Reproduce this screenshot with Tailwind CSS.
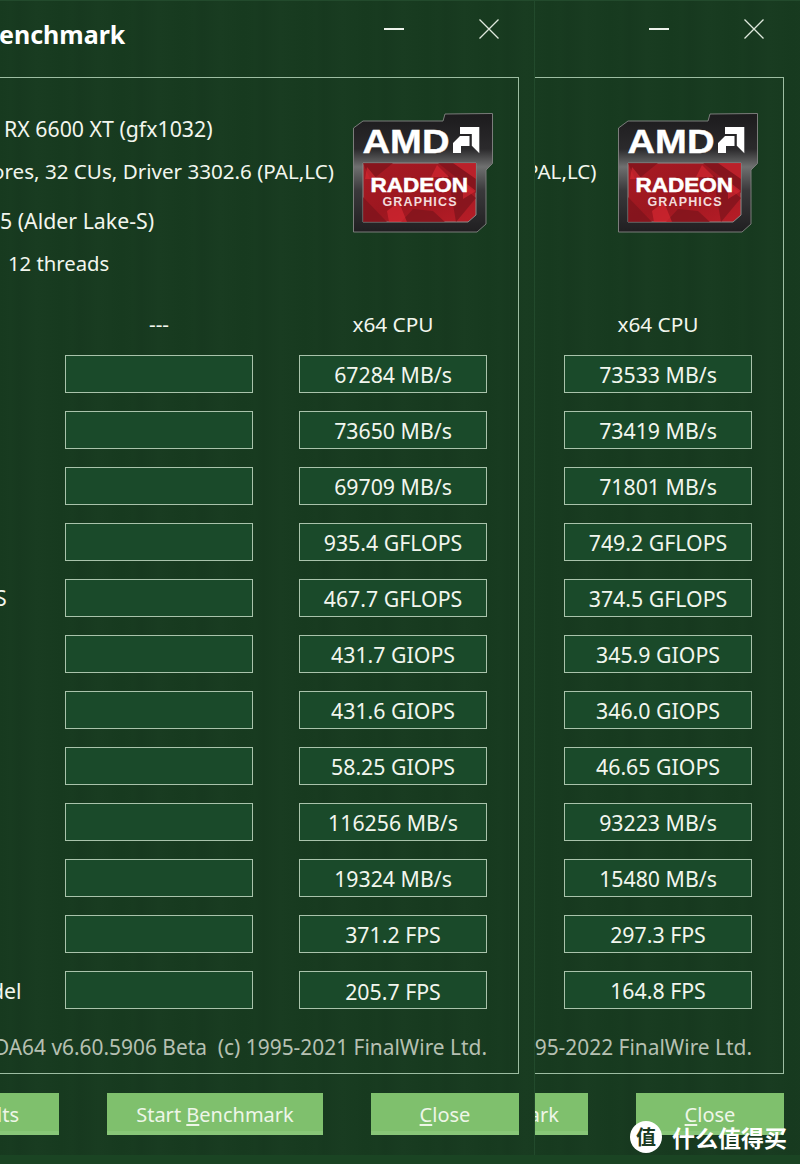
<!DOCTYPE html>
<html><head><meta charset="utf-8"><script src="https://cdn.jsdelivr.net/npm/@tailwindcss/browser@4"></script></head>
<body class="m-0 bg-[#173a1f]">
<div class="relative w-[800px] h-[1164px] overflow-hidden text-[21.3px] text-[#f2f6ee] font-['Noto_Sans','Open_Sans',sans-serif] bg-[repeating-linear-gradient(90deg,#173a1f_0px,#183b20_11px,#17391f_19px,#193c21_37px,#173a1f_61px)]">
<div class="flex h-[1155px]">
  <!-- left window -->
  <div class="w-[535px] shrink-0 overflow-hidden border-r border-t border-[#224a2c]">
    <div class="flex justify-between h-[76px] pr-[35px]">
      <div class="ml-[-1px] mt-[13px] leading-[40px] text-[25px] font-bold text-white">enchmark</div>
      <div class="flex gap-[75px] pt-[18px] items-start">
        <svg width="20" height="20" viewBox="0 0 20 20"><path d="M0 10h20" stroke="#eef3ec" stroke-width="2"/></svg>
        <svg width="20" height="20" viewBox="0 0 20 20"><path d="M.5.5l19 19M19.5.5l-19 19" stroke="#dfe8dc" stroke-width="1.3" fill="none"/></svg>
      </div>
    </div>
    <div class="w-[519px] h-[997px] border-t border-r border-b border-[#9dbda2] pt-[30px]">
      <div class="flex justify-between h-[176px] pr-[25px]">
        <div class="leading-[42px] whitespace-nowrap">
          <div class="pl-[4px]">RX 6600 XT (gfx1032)</div>
          <div class="ml-[-8px] text-[20.600px]">ores, 32 CUs, Driver 3302.6 (PAL,LC)</div>
          <div class="mt-[8px]">5 (Alder Lake-S)</div>
          <div class="pl-[8px] text-[20.300px]">12 threads</div>
        </div>
        <svg class="mt-[5px] shrink-0" width="140" height="120" viewBox="0 0 140 120">
          <defs>
            <linearGradient id="fa" x1="0" y1="0" x2="0" y2="1"><stop offset="0" stop-color="#1c1b1d"/><stop offset=".3" stop-color="#2b2a2c"/><stop offset=".45" stop-color="#6f7070"/><stop offset=".65" stop-color="#3a393b"/><stop offset="1" stop-color="#201f21"/></linearGradient>
            <linearGradient id="ra" x1="0" y1="0" x2="1" y2="1"><stop offset="0" stop-color="#a81a23"/><stop offset=".5" stop-color="#9c1720"/><stop offset="1" stop-color="#b81d27"/></linearGradient>
          </defs>
          <path d="M.5 15L10 8h80l2-7 47.500-.5v50L133 57v54l-9 8H.5z" fill="url(#fa)" stroke="#7b7d7b"/>
          <path d="M10 50h113v52l-8 7H10z" fill="url(#ra)" stroke="#8a8a88"/>
          <path d="M85 50h38v30zM48 109l12-13 20 2 12 11zM10 84l24 25H10zM95 62l28 23-20 24zM10 50h30L18 68z" fill="#7e141c" opacity=".75"/>
          <path d="M100 50h23v16zM84 52l12 12H78zM110 68l13 10-13 8zM34 98l12-9 8 20H36zM14 54l10 12H12z" fill="#dd2a33" opacity=".6"/>
          <text x="9.500" y="40" font-family="Liberation Sans" font-weight="700" font-size="34" fill="#fff" stroke="#fff" stroke-width=".4" textLength="87" lengthAdjust="spacingAndGlyphs">AMD</text>
          <path d="M107 14h19.300v26.300l-7.500-7.500V21H107zM100 40V30l7-7h9.500v10H108v7z" fill="#fff"/>
          <text x="17.500" y="79" font-family="Liberation Sans" font-weight="700" font-size="19.500" fill="#fff" stroke="#fff" stroke-width=".5" textLength="97.500" lengthAdjust="spacingAndGlyphs">RADEON</text>
          <text x="29.500" y="93" font-family="Liberation Sans" font-weight="700" font-size="12.500" fill="#f3dcdc" textLength="74" lengthAdjust="spacing">GRAPHICS</text>
        </svg>
      </div>
      <div class="flex h-[40px] mt-[21px] pl-[65px] leading-[38px] text-center text-[20.800px]">
        <div class="w-[188px]">---</div>
        <div class="w-[188px] ml-[46px]">x64 CPU</div>
      </div>
      <div class="flex flex-col gap-[18px] mt-[10px]">
        <div class="flex h-[38px] leading-[38px] text-center"><div class="w-[65px]"></div><div class="w-[188px] border border-[#a9c3ab] bg-[#1a4a2a]"></div><div class="w-[188px] ml-[46px] border border-[#a9c3ab] bg-[#1a4a2a]">67284 MB/s</div></div>
        <div class="flex h-[38px] leading-[38px] text-center"><div class="w-[65px]"></div><div class="w-[188px] border border-[#a9c3ab] bg-[#1a4a2a]"></div><div class="w-[188px] ml-[46px] border border-[#a9c3ab] bg-[#1a4a2a]">73650 MB/s</div></div>
        <div class="flex h-[38px] leading-[38px] text-center"><div class="w-[65px]"></div><div class="w-[188px] border border-[#a9c3ab] bg-[#1a4a2a]"></div><div class="w-[188px] ml-[46px] border border-[#a9c3ab] bg-[#1a4a2a]">69709 MB/s</div></div>
        <div class="flex h-[38px] leading-[38px] text-center"><div class="w-[65px]"></div><div class="w-[188px] border border-[#a9c3ab] bg-[#1a4a2a]"></div><div class="w-[188px] ml-[46px] border border-[#a9c3ab] bg-[#1a4a2a]">935.4 GFLOPS</div></div>
        <div class="flex h-[38px] leading-[38px] text-center"><div class="w-[65px] text-left ml-[-5px] mr-[5px]">S</div><div class="w-[188px] border border-[#a9c3ab] bg-[#1a4a2a]"></div><div class="w-[188px] ml-[46px] border border-[#a9c3ab] bg-[#1a4a2a]">467.7 GFLOPS</div></div>
        <div class="flex h-[38px] leading-[38px] text-center"><div class="w-[65px]"></div><div class="w-[188px] border border-[#a9c3ab] bg-[#1a4a2a]"></div><div class="w-[188px] ml-[46px] border border-[#a9c3ab] bg-[#1a4a2a]">431.7 GIOPS</div></div>
        <div class="flex h-[38px] leading-[38px] text-center"><div class="w-[65px]"></div><div class="w-[188px] border border-[#a9c3ab] bg-[#1a4a2a]"></div><div class="w-[188px] ml-[46px] border border-[#a9c3ab] bg-[#1a4a2a]">431.6 GIOPS</div></div>
        <div class="flex h-[38px] leading-[38px] text-center"><div class="w-[65px]"></div><div class="w-[188px] border border-[#a9c3ab] bg-[#1a4a2a]"></div><div class="w-[188px] ml-[46px] border border-[#a9c3ab] bg-[#1a4a2a]">58.25 GIOPS</div></div>
        <div class="flex h-[38px] leading-[38px] text-center"><div class="w-[65px]"></div><div class="w-[188px] border border-[#a9c3ab] bg-[#1a4a2a]"></div><div class="w-[188px] ml-[46px] border border-[#a9c3ab] bg-[#1a4a2a]">116256 MB/s</div></div>
        <div class="flex h-[38px] leading-[38px] text-center"><div class="w-[65px]"></div><div class="w-[188px] border border-[#a9c3ab] bg-[#1a4a2a]"></div><div class="w-[188px] ml-[46px] border border-[#a9c3ab] bg-[#1a4a2a]">19324 MB/s</div></div>
        <div class="flex h-[38px] leading-[38px] text-center"><div class="w-[65px]"></div><div class="w-[188px] border border-[#a9c3ab] bg-[#1a4a2a]"></div><div class="w-[188px] ml-[46px] border border-[#a9c3ab] bg-[#1a4a2a]">371.2 FPS</div></div>
        <div class="flex h-[38px] leading-[39px] text-center"><div class="w-[65px] text-left ml-[-9px] mr-[9px]">del</div><div class="w-[188px] border border-[#a9c3ab] bg-[#1a4a2a]"></div><div class="w-[188px] ml-[46px] border border-[#a9c3ab] bg-[#1a4a2a]">205.7 FPS</div></div>
      </div>
      <div class="flex justify-end mt-[23px] pr-[31px] leading-[30px] text-[20.900px] whitespace-nowrap text-[#b6c0b2]">DA64 v6.60.5906 Beta&nbsp; (c) 1995-2021 FinalWire Ltd.</div>
    </div>
    <div class="flex gap-[48px] pt-[19px] leading-[43px] text-[20px] text-center text-[#eef6e8]">
      <div class="flex justify-end w-[59px] h-[42px] bg-[#7fc06d] border-b-4 border-[#88c778] pr-[40px]">lts</div>
      <div class="w-[216px] h-[42px] bg-[#7fc06d] border-b-4 border-[#88c778]">Start <span class="underline underline-offset-2">B</span>enchmark</div>
      <div class="w-[148px] h-[42px] bg-[#7fc06d] border-b-4 border-[#88c778]"><span class="underline underline-offset-2">C</span>lose</div>
    </div>
  </div>
  <!-- right window -->
  <div class="w-[265px] shrink-0 overflow-hidden border-t border-[#224a2c]">
    <div class="flex justify-end h-[76px] pr-[36px]">
      <div class="flex gap-[75px] pt-[18px] items-start">
        <svg width="20" height="20" viewBox="0 0 20 20"><path d="M0 10h20" stroke="#eef3ec" stroke-width="2"/></svg>
        <svg width="20" height="20" viewBox="0 0 20 20"><path d="M.5.5l19 19M19.5.5l-19 19" stroke="#dfe8dc" stroke-width="1.3" fill="none"/></svg>
      </div>
    </div>
    <div class="w-[249px] h-[997px] border-t border-r border-b border-[#9dbda2] pt-[30px]">
      <div class="flex justify-between h-[176px] pr-[25px]">
        <div class="leading-[42px] whitespace-nowrap pt-[42px] ml-[-9px] text-[20.600px]">PAL,LC)</div>
        <svg class="mt-[5px] shrink-0" width="140" height="120" viewBox="0 0 140 120">
          <defs>
            <linearGradient id="fb" x1="0" y1="0" x2="0" y2="1"><stop offset="0" stop-color="#1c1b1d"/><stop offset=".3" stop-color="#2b2a2c"/><stop offset=".45" stop-color="#6f7070"/><stop offset=".65" stop-color="#3a393b"/><stop offset="1" stop-color="#201f21"/></linearGradient>
            <linearGradient id="rb" x1="0" y1="0" x2="1" y2="1"><stop offset="0" stop-color="#a81a23"/><stop offset=".5" stop-color="#9c1720"/><stop offset="1" stop-color="#b81d27"/></linearGradient>
          </defs>
          <path d="M.5 15L10 8h80l2-7 47.500-.5v50L133 57v54l-9 8H.5z" fill="url(#fb)" stroke="#7b7d7b"/>
          <path d="M10 50h113v52l-8 7H10z" fill="url(#rb)" stroke="#8a8a88"/>
          <path d="M85 50h38v30zM48 109l12-13 20 2 12 11zM10 84l24 25H10zM95 62l28 23-20 24zM10 50h30L18 68z" fill="#7e141c" opacity=".75"/>
          <path d="M100 50h23v16zM84 52l12 12H78zM110 68l13 10-13 8zM34 98l12-9 8 20H36zM14 54l10 12H12z" fill="#dd2a33" opacity=".6"/>
          <text x="9.500" y="40" font-family="Liberation Sans" font-weight="700" font-size="34" fill="#fff" stroke="#fff" stroke-width=".4" textLength="87" lengthAdjust="spacingAndGlyphs">AMD</text>
          <path d="M107 14h19.300v26.300l-7.500-7.500V21H107zM100 40V30l7-7h9.500v10H108v7z" fill="#fff"/>
          <text x="17.500" y="79" font-family="Liberation Sans" font-weight="700" font-size="19.500" fill="#fff" stroke="#fff" stroke-width=".5" textLength="97.500" lengthAdjust="spacingAndGlyphs">RADEON</text>
          <text x="29.500" y="93" font-family="Liberation Sans" font-weight="700" font-size="12.500" fill="#f3dcdc" textLength="74" lengthAdjust="spacing">GRAPHICS</text>
        </svg>
      </div>
      <div class="flex h-[40px] mt-[21px] pl-[29px] leading-[38px] text-center text-[20.800px]"><div class="w-[188px]">x64 CPU</div></div>
      <div class="flex flex-col gap-[18px] mt-[10px] pl-[29px] leading-[38px] text-center">
        <div class="w-[188px] h-[38px] border border-[#a9c3ab] bg-[#1a4a2a]">73533 MB/s</div>
        <div class="w-[188px] h-[38px] border border-[#a9c3ab] bg-[#1a4a2a]">73419 MB/s</div>
        <div class="w-[188px] h-[38px] border border-[#a9c3ab] bg-[#1a4a2a]">71801 MB/s</div>
        <div class="w-[188px] h-[38px] border border-[#a9c3ab] bg-[#1a4a2a]">749.2 GFLOPS</div>
        <div class="w-[188px] h-[38px] border border-[#a9c3ab] bg-[#1a4a2a]">374.5 GFLOPS</div>
        <div class="w-[188px] h-[38px] border border-[#a9c3ab] bg-[#1a4a2a]">345.9 GIOPS</div>
        <div class="w-[188px] h-[38px] border border-[#a9c3ab] bg-[#1a4a2a]">346.0 GIOPS</div>
        <div class="w-[188px] h-[38px] border border-[#a9c3ab] bg-[#1a4a2a]">46.65 GIOPS</div>
        <div class="w-[188px] h-[38px] border border-[#a9c3ab] bg-[#1a4a2a]">93223 MB/s</div>
        <div class="w-[188px] h-[38px] border border-[#a9c3ab] bg-[#1a4a2a]">15480 MB/s</div>
        <div class="w-[188px] h-[38px] border border-[#a9c3ab] bg-[#1a4a2a]">297.3 FPS</div>
        <div class="w-[188px] h-[38px] border border-[#a9c3ab] bg-[#1a4a2a]">164.8 FPS</div>
      </div>
      <div class="flex justify-end mt-[23px] pr-[31px] leading-[30px] text-[20.900px] whitespace-nowrap text-[#b6c0b2]">95-2022 FinalWire Ltd.</div>
    </div>
    <div class="flex gap-[48px] pt-[19px] leading-[43px] text-[20px] text-center text-[#eef6e8]">
      <div class="flex justify-end w-[53px] h-[42px] bg-[#7fc06d] border-b-4 border-[#88c778] pr-[29px]">ark</div>
      <div class="w-[148px] h-[42px] bg-[#7fc06d] border-b-4 border-[#88c778]"><span class="underline underline-offset-2">C</span>lose</div>
    </div>
  </div>
</div>
<div class="h-[9px] bg-[#1a4423]"></div>
<!-- watermark -->
<div class="absolute left-[630px] top-[1121px] flex items-center gap-[10px] text-white font-['Noto_Sans_CJK_SC',sans-serif] font-bold">
  <div class="w-[32px] h-[32px] rounded-full bg-white text-[#1b3a22] text-[20px] leading-[32px] text-center">值</div>
  <div class="text-[23px] leading-[32px] whitespace-nowrap">什么值得买</div>
</div>
</div>
</body></html>
